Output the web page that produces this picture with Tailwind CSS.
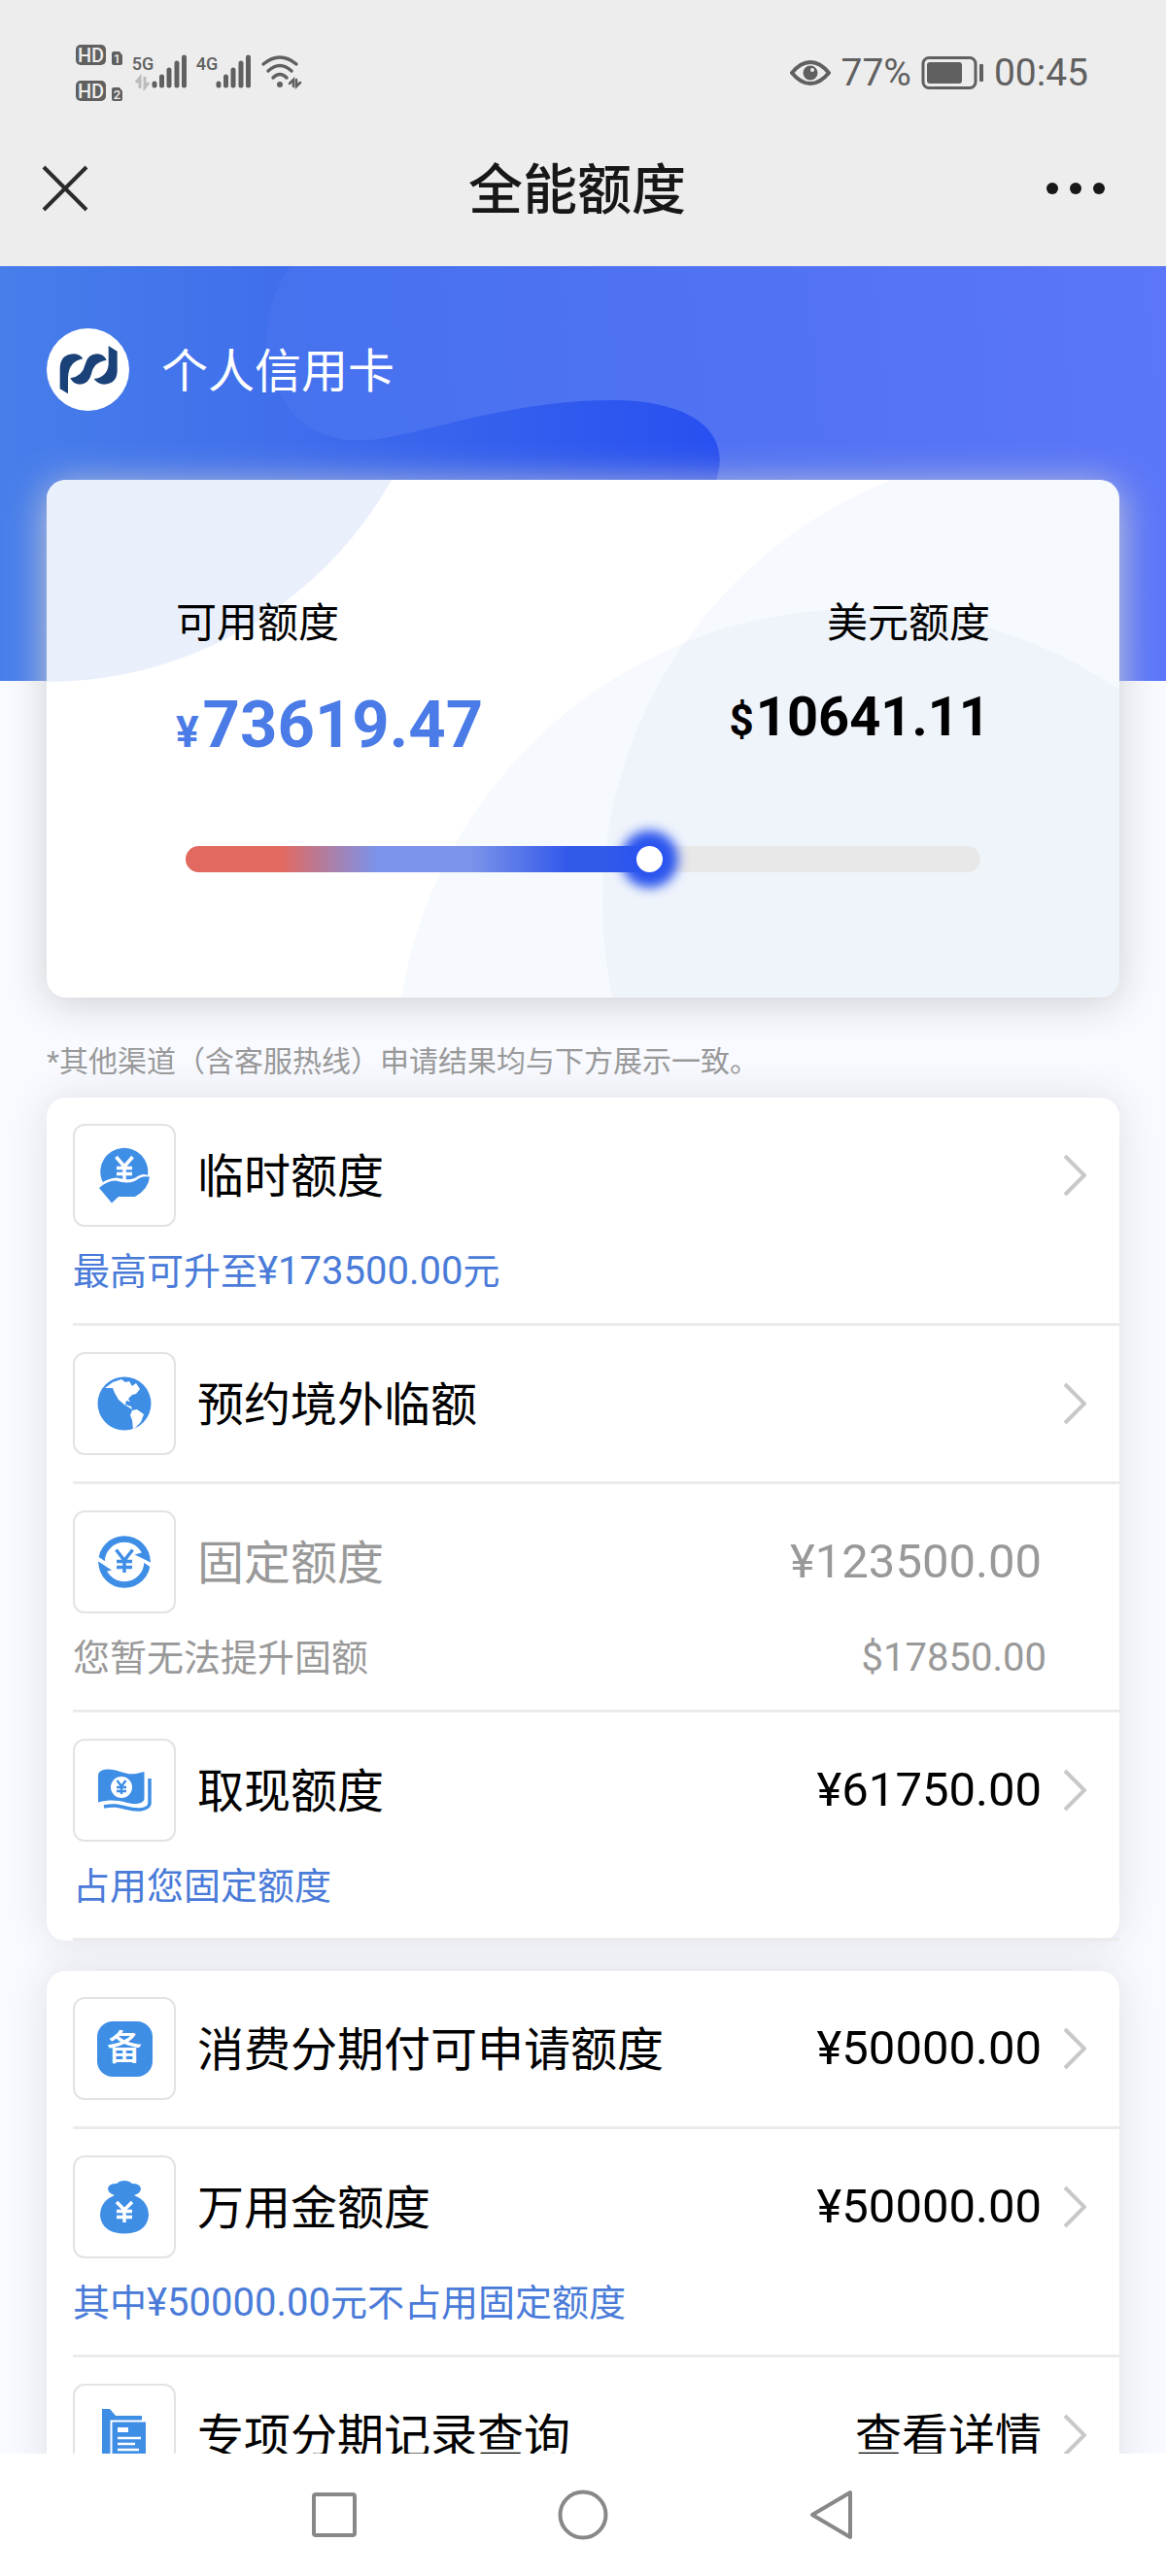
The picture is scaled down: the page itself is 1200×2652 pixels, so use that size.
<!DOCTYPE html>
<html lang="zh-CN">
<head>
    <meta charset="UTF-8">
    <meta name="viewport" content="width=device-width, initial-scale=1.0">
    <title>全能额度</title>
    <script src="https://cdn.jsdelivr.net/npm/@tailwindcss/browser@4"></script>
</head>
<body class="flex h-screen flex-col bg-[#f8faff] font-['Roboto','Noto_Sans_CJK_SC',sans-serif] text-black">

    <header class="shrink-0 bg-[#ededed]">
        <!-- status bar -->
        <div class="flex h-[114px] items-center justify-between pt-9 pr-20 pl-19 text-[39px] text-[#606060]">
            <svg class="h-[62px] w-[236px]" viewBox="76 45 236 62" fill="#606060" font-family="Roboto, sans-serif" font-weight="500">
                <rect x="78" y="47" width="31" height="21" rx="5"/>
                <text x="93.500" y="64.500" font-size="20" fill="#ededed" text-anchor="middle">HD</text>
                <path d="M117 54h6l3 4v8q0 2-2 2h-7q-2 0-2-2V56q0-2 2-2z"/>
                <text x="120.500" y="66" font-size="13" fill="#ededed" text-anchor="middle">1</text>
                <rect x="78" y="84" width="31" height="21" rx="5"/>
                <text x="93.500" y="101.500" font-size="20" fill="#ededed" text-anchor="middle">HD</text>
                <path d="M117 91h6l3 4v8q0 2-2 2h-7q-2 0-2-2V93q0-2 2-2z"/>
                <text x="120.500" y="103" font-size="13" fill="#ededed" text-anchor="middle">2</text>
                <text x="147" y="73" font-size="18" text-anchor="middle">5G</text>
                <path d="M144 92V81l-4 5M149 80v11l4-5" fill="none" stroke="#bcbcbc" stroke-width="3"/>
                <g stroke="#606060" stroke-width="5" stroke-linecap="round">
                    <path d="M159 87v2M166.500 80v9M174 73v16M182 66v23M189.500 60v29"/>
                    <path d="M225 87v2M232.500 80v9M240 73v16M248 66v23M255.500 60v29"/>
                </g>
                <text x="213" y="73" font-size="18" text-anchor="middle">4G</text>
                <g fill="none" stroke="#606060" stroke-width="3.500" stroke-linecap="round">
                    <path d="M271 67q17-14 34 0M276 74q12-11 24 0M281 81q7-7 14 0"/>
                    <path d="M302 90v-7l-4 4M305 83v7l4-4" stroke-width="2.500"/>
                </g>
                <circle cx="288" cy="88" r="3"/>
            </svg>
            <div class="flex items-center">
                <svg class="h-[30px] w-[42px]" viewBox="0 0 42 30">
                    <path d="M2 15Q11 4 21 4t19 11Q31 26 21 26T2 15z" fill="none" stroke="#606060" stroke-width="4"/>
                    <circle cx="21" cy="15" r="7.500" fill="#606060"/>
                    <circle cx="23" cy="12" r="2" fill="#ededed"/>
                </svg>
                <span class="ml-2.5">77%</span>
                <svg class="ml-2.5 h-[36px] w-[65px]" viewBox="0 0 65 36">
                    <rect x="2" y="2.500" width="54" height="31" rx="6" fill="none" stroke="#606060" stroke-width="3"/>
                    <rect x="6" y="7" width="36" height="22" rx="3" fill="#606060"/>
                    <rect x="60" y="9" width="4" height="18" rx="1" fill="#606060"/>
                </svg>
                <span class="ml-2.5">00:45</span>
            </div>
        </div>

        <!-- title bar -->
        <div class="flex h-40 items-center justify-between pr-[62px] pl-[42px]">
            <button class="w-[70px]" aria-label="关闭">
                <svg class="h-[50px] w-[50px]" viewBox="0 0 50 50" stroke="#2b2b2b" stroke-width="4"><path d="M3 3l44 44M47 3L3 47"/></svg>
            </button>
            <h1 class="pt-1 text-[56px] leading-[80px] font-medium text-[#171717]">全能额度</h1>
            <button class="w-[62px]" aria-label="更多">
                <svg class="h-5 w-[62px]" viewBox="0 0 62 20" fill="#171717"><circle cx="7" cy="10" r="6"/><circle cx="31" cy="10" r="6"/><circle cx="55" cy="10" r="6"/></svg>
            </button>
        </div>
    </header>

    <main class="relative flex-1 overflow-y-auto [scrollbar-width:none]">
        <!-- blue backdrop -->
        <svg class="absolute inset-x-0 top-0 h-[427px] w-full" viewBox="0 0 1200 427" preserveAspectRatio="none">
            <defs>
                <linearGradient id="base" gradientUnits="userSpaceOnUse" x1="0" y1="0" x2="740" y2="0">
                    <stop offset="0" stop-color="#477eea"/>
                    <stop offset=".4" stop-color="#406eec"/>
                    <stop offset="1" stop-color="#284ff0"/>
                </linearGradient>
                <linearGradient id="light" gradientUnits="userSpaceOnUse" x1="280" y1="200" x2="1200" y2="120">
                    <stop offset="0" stop-color="#4672ee"/>
                    <stop offset=".5" stop-color="#5072f3"/>
                    <stop offset="1" stop-color="#5b76f9"/>
                </linearGradient>
            </defs>
            <rect width="1200" height="427" fill="url(#base)"/>
            <path d="M299 0C270 40 266 90 290 135C308 170 345 184 390 178C450 168 530 138 630 138C710 138 758 170 735 226V427H1200V0Z" fill="url(#light)"/>
        </svg>

        <div class="relative px-12 pt-16">
            <div class="flex items-center gap-[33px]">
                <svg class="size-[85px]" viewBox="24 54 255 255" fill="#1a4278">
                    <circle cx="151.500" cy="181.500" r="127.500" fill="#fff"/>
                    <path d="M90 256L65 241V178Q66 135 106 133Q126 133 136 148Q92 156 90 205Z"/>
                    <path d="M97 208Q106 227 127 227Q155 225 162 195Q169 158 209 152Q201 134 180 133Q150 134 143 165Q135 202 97 208Z"/>
                    <path d="M215 108L242 125V187Q240 226 202 227Q180 226 170 210Q212 205 215 165Z"/>
                </svg>
                <h2 class="pt-1 text-[48px] leading-[72px] text-white">个人信用卡</h2>
            </div>

            <!-- available credit -->
            <section class="relative mt-[71px] rounded-[20px] bg-white shadow-[0_6px_40px_#cfcfd2]">
                <svg class="absolute inset-0 h-full w-full rounded-[20px]" viewBox="0 0 1104 533" preserveAspectRatio="none">
                    <circle cx="0" cy="-199" r="407" fill="#eaf0fb"/>
                    <circle cx="1040" cy="436" r="468" fill="#e0e8f8" fill-opacity=".28"/>
                    <circle cx="835" cy="609" r="476" fill="#e0e8f8" fill-opacity=".28"/>
                </svg>
                <div class="relative px-[133px] pt-[118px] pb-[129px]">
                    <div class="flex items-start justify-between">
                        <div>
                            <p class="text-[42px] leading-[60px]">可用额度</p>
                            <p class="mt-[34px] text-[67px] leading-[80px] font-bold text-[#4a7be6]"><span class="mr-1 text-[44px] leading-none">¥</span>73619.47</p>
                        </div>
                        <div class="text-right">
                            <p class="text-[42px] leading-[60px]">美元额度</p>
                            <p class="mt-[34px] text-[56px] leading-[64px] font-bold"><span class="mr-0.5 text-[44px] leading-none">$</span>10641.11</p>
                        </div>
                    </div>
                    <div class="mt-[85px] px-2.5">
                        <input type="range" min="0" max="100" step="any" value="58.7" aria-label="可用额度比例"
                            class="block h-[27px] w-full appearance-none rounded-full bg-[linear-gradient(90deg,#e2695f_12%,#7b93ea_24%,#7b93ea_36%,#3259ea_48%,#3259ea_58%,#e8e8e8_58%)] [&::-webkit-slider-thumb]:size-[27px] [&::-webkit-slider-thumb]:appearance-none [&::-webkit-slider-thumb]:rounded-full [&::-webkit-slider-thumb]:bg-white [&::-webkit-slider-thumb]:shadow-[0_0_12px_16px_#2b55ee]">
                    </div>
                </div>
            </section>

            <p class="mt-[46px] text-[30px] leading-10 text-[#999]">*其他渠道（含客服热线）申请结果均与下方展示一致。</p>

            <ul class="mt-[17px] rounded-[20px] bg-white pl-[27px] shadow-[0_0_40px_#dfe0e6]">
                <li class="border-b-3 border-[#ebebeb] py-[27px]">
                    <a href="#" class="flex items-center pr-[34px]">
                        <span class="flex size-[106px] items-center justify-center rounded-xl border-2 border-[#e3e3e3]">
                            <svg class="size-[60px]" viewBox="0 0 60 60" fill="#3f8ee6">
                                <path d="M6.500 34A24.500 24.500 0 1 1 54 30Q49 27 42 32Q37 36 22 32.500Q14 33 8 37Z"/>
                                <path d="M21.500 11l8.500 10 8.500-10M30 20v14M22 22.500h16M22 28.500h16" fill="none" stroke="#fff" stroke-width="3.500"/>
                                <path d="M4 43Q13 35 21 35.500Q36 40 43 34.500Q48 30 56 31.500Q55 44 41 52H24L17 58.500Z"/>
                            </svg>
                        </span>
                        <span class="ml-[22px] flex-1 pt-1 text-[48px] leading-[72px]">临时额度</span>
                        <svg class="ml-6 h-11 w-6" viewBox="0 0 24 44" fill="none" stroke="#c8c8c8" stroke-width="4"><path d="M2 2l20 20L2 42"/></svg>
                    </a>
                    <p class="mt-5 text-[38px] leading-[52px] text-[#4a7bd8]">最高可升至<span class="text-[40px]">¥173500.00</span>元</p>
                </li>
                <li class="border-b-3 border-[#ebebeb] py-[27px]">
                    <a href="#" class="flex items-center pr-[34px]">
                        <span class="flex size-[106px] items-center justify-center rounded-xl border-2 border-[#e3e3e3]">
                            <svg class="size-[60px]" viewBox="0 0 60 60" fill="#3f8ee6">
                                <circle cx="30" cy="30" r="27.500"/>
                                <path d="M10 14L18 8L27 5L31 8L35 7L38 12L42 9L46 15L42 20L38 21L34 25L36 28L32 27L31 31L37 33L38 36L30 31L24 26L20 19L18 14Z" fill="#fff"/>
                                <path d="M38 37L43 36L50 41L47 49L39 57L38 47L36 42Z" fill="#fff"/>
                            </svg>
                        </span>
                        <span class="ml-[22px] flex-1 pt-1 text-[48px] leading-[72px]">预约境外临额</span>
                        <svg class="ml-6 h-11 w-6" viewBox="0 0 24 44" fill="none" stroke="#c8c8c8" stroke-width="4"><path d="M2 2l20 20L2 42"/></svg>
                    </a>
                </li>
                <!-- fixed limit cannot be raised, so no link -->
                <li class="border-b-3 border-[#ebebeb] py-[27px] text-[#999]">
                    <div class="flex items-center pr-20">
                        <span class="flex size-[106px] items-center justify-center rounded-xl border-2 border-[#e3e3e3]">
                            <svg class="size-[60px]" viewBox="0 0 60 60" fill="#3f8ee6">
                                <circle cx="30" cy="30" r="23.500" fill="none" stroke="#3f8ee6" stroke-width="6.500"/>
                                <path d="M0 25l14 9.500M60 35l-14-9.500" stroke="#fff" stroke-width="4"/>
                                <path d="M3 29.500L17 38.500L6 41ZM57 30.500L40.500 22.500L53 19Z"/>
                                <path d="M21.500 17.500l8.500 11 8.500-11M30 28v13M22 29.500h16M22 35.500h16" fill="none" stroke="#3f8ee6" stroke-width="3.500"/>
                            </svg>
                        </span>
                        <span class="ml-[22px] flex-1 pt-1 text-[48px] leading-[72px]">固定额度</span>
                        <span class="text-[49px] leading-[72px]">¥123500.00</span>
                    </div>
                    <div class="mt-5 flex justify-between pr-[75px] text-[38px] leading-[52px]">
                        <span>您暂无法提升固额</span>
                        <span class="text-[40px]">$17850.00</span>
                    </div>
                </li>
                <li class="border-b-3 border-[#ebebeb] py-[27px]">
                    <a href="#" class="flex items-center pr-[34px]">
                        <span class="flex size-[106px] items-center justify-center rounded-xl border-2 border-[#e3e3e3]">
                            <svg class="size-[60px]" viewBox="0 0 60 60" fill="#3f8ee6">
                                <path d="M3 14Q4 9 12 8.500C24 8 30 15 42 13Q46 12 50.500 11V39Q50 43 43 44C32 45 24 37 3 42.500Z"/>
                                <circle cx="27" cy="27" r="11" fill="#fff"/>
                                <path d="M22.500 20l4.500 6 4.500-6M27 26v8M22 27h10M22 31h10" fill="none" stroke="#3f8ee6" stroke-width="2.500"/>
                                <path d="M56 18V44Q55 49 46 50C32 51 26 43 9 47" fill="none" stroke="#3f8ee6" stroke-width="3.500"/>
                            </svg>
                        </span>
                        <span class="ml-[22px] flex-1 pt-1 text-[48px] leading-[72px]">取现额度</span>
                        <span class="text-[49px] leading-[72px]">¥61750.00</span>
                        <svg class="ml-[22px] h-11 w-6" viewBox="0 0 24 44" fill="none" stroke="#c8c8c8" stroke-width="4"><path d="M2 2l20 20L2 42"/></svg>
                    </a>
                    <p class="mt-5 text-[38px] leading-[52px] text-[#4a7bd8]">占用您固定额度</p>
                </li>
            </ul>

            <ul class="mt-[31px] rounded-[20px] bg-white pl-[27px] shadow-[0_0_40px_#dfe0e6]">
                <li class="border-b-3 border-[#ebebeb] py-[27px]">
                    <a href="#" class="flex items-center pr-[34px]">
                        <span class="flex size-[106px] items-center justify-center rounded-xl border-2 border-[#e3e3e3]">
                            <span class="flex size-[57px] items-center justify-center rounded-2xl bg-[#3f8ee6] text-[36px] leading-none font-medium text-white">备</span>
                        </span>
                        <span class="ml-[22px] flex-1 pt-1 text-[48px] leading-[72px]">消费分期付可申请额度</span>
                        <span class="text-[49px] leading-[72px]">¥50000.00</span>
                        <svg class="ml-[22px] h-11 w-6" viewBox="0 0 24 44" fill="none" stroke="#c8c8c8" stroke-width="4"><path d="M2 2l20 20L2 42"/></svg>
                    </a>
                </li>
                <li class="border-b-3 border-[#ebebeb] py-[27px]">
                    <a href="#" class="flex items-center pr-[34px]">
                        <span class="flex size-[106px] items-center justify-center rounded-xl border-2 border-[#e3e3e3]">
                            <svg class="size-[60px]" viewBox="0 0 60 60" fill="#3f8ee6">
                                <path d="M20 18Q13 16 13 11Q14 6 22 6Q25 3 30 3T38 6Q46 6 47 11Q47 16 40 18Q55 24 55 39Q53 57 30 57.500Q7 57 5 39Q5 24 20 18Z"/>
                                <path d="M22 25l8 8 8-8M30 32v14M22 34.500h16M22 40.500h16" fill="none" stroke="#fff" stroke-width="3.500"/>
                            </svg>
                        </span>
                        <span class="ml-[22px] flex-1 pt-1 text-[48px] leading-[72px]">万用金额度</span>
                        <span class="text-[49px] leading-[72px]">¥50000.00</span>
                        <svg class="ml-[22px] h-11 w-6" viewBox="0 0 24 44" fill="none" stroke="#c8c8c8" stroke-width="4"><path d="M2 2l20 20L2 42"/></svg>
                    </a>
                    <p class="mt-5 text-[38px] leading-[52px] text-[#4a7bd8]">其中<span class="text-[40px]">¥50000.00</span>元不占用固定额度</p>
                </li>
                <li class="border-b-3 border-[#ebebeb] py-[27px]">
                    <a href="#" class="flex items-center pr-[34px]">
                        <span class="flex size-[106px] items-center justify-center rounded-xl border-2 border-[#e3e3e3]">
                            <svg class="size-[60px]" viewBox="0 0 60 60" fill="#3f8ee6">
                                <path d="M7 3h8l6 7h27v46H7z"/>
                                <path d="M16.500 15.500H53V57H16.500z" stroke="#fff" stroke-width="2"/>
                                <path d="M23 24.500h11" stroke="#fff" stroke-width="5"/>
                                <path d="M23 33h24M23 39h18M23 45h22" stroke="#fff" stroke-width="2.500"/>
                            </svg>
                        </span>
                        <span class="ml-[22px] flex-1 pt-1 text-[48px] leading-[72px]">专项分期记录查询</span>
                        <span class="pt-1 text-[48px] leading-[72px]">查看详情</span>
                        <svg class="ml-[22px] h-11 w-6" viewBox="0 0 24 44" fill="none" stroke="#c8c8c8" stroke-width="4"><path d="M2 2l20 20L2 42"/></svg>
                    </a>
                </li>
            </ul>
        </div>
    </main>

    <!-- system navigation -->
    <nav class="grid h-[126px] shrink-0 grid-cols-3 items-center bg-white px-[18%]">
        <button class="flex justify-center" aria-label="最近任务">
            <svg class="size-[54px]" viewBox="0 0 54 54" fill="none" stroke="#888" stroke-width="4"><rect x="6" y="6" width="42" height="42" rx="2"/></svg>
        </button>
        <button class="flex justify-center" aria-label="主屏幕">
            <svg class="size-[54px]" viewBox="0 0 54 54" fill="none" stroke="#888" stroke-width="4"><circle cx="27" cy="27" r="23.500"/></svg>
        </button>
        <button class="flex justify-center" aria-label="返回">
            <svg class="size-[54px]" viewBox="0 0 54 54" fill="none" stroke="#888" stroke-width="4" stroke-linejoin="round"><path d="M7 27L46 4v46z"/></svg>
        </button>
    </nav>

</body>
</html>
